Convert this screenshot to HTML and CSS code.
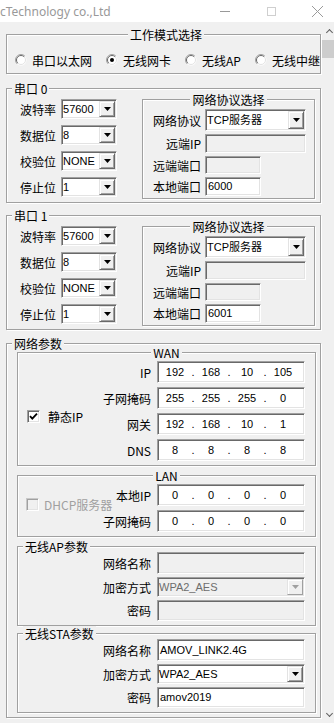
FILE: index.html
```html
<!DOCTYPE html>
<html lang="zh-CN">
<head>
<meta charset="utf-8">
<title>配置</title>
<link rel="stylesheet" href="styles.css">
</head>
<body>
<div class="window">
  <header class="titlebar">
    <span class="title">cTechnology co.,Ltd</span>
    <div class="caption">
      <span class="cap-btn"><span class="min-icon"></span></span>
      <span class="cap-btn"><span class="max-icon"></span></span>
      <span class="cap-btn"><span class="close-icon"></span></span>
    </div>
  </header>
  <div class="client">
    <main class="content">

      <section class="group mode">
        <div class="group-title">工作模式选择</div>
        <div class="radios">
          <label class="radio"><svg class="radio-icon" width="12" height="12" viewBox="0 0 12 12"><circle cx="6" cy="6" r="5.5" fill="#fff"/><path d="M2.1 9.9A5.5 5.5 0 0 1 9.9 2.1" fill="none" stroke="#a0a0a0"/><path d="M2.8 9.2A4.5 4.5 0 0 1 9.2 2.8" fill="none" stroke="#696969"/><path d="M9.2 2.8A4.5 4.5 0 0 1 2.8 9.2" fill="none" stroke="#e3e3e3"/></svg>串口以太网</label>
          <label class="radio"><svg class="radio-icon" width="12" height="12" viewBox="0 0 12 12"><circle cx="6" cy="6" r="5.5" fill="#fff"/><path d="M2.1 9.9A5.5 5.5 0 0 1 9.9 2.1" fill="none" stroke="#a0a0a0"/><path d="M2.8 9.2A4.5 4.5 0 0 1 9.2 2.8" fill="none" stroke="#696969"/><path d="M9.2 2.8A4.5 4.5 0 0 1 2.8 9.2" fill="none" stroke="#e3e3e3"/><circle cx="6" cy="6" r="2" fill="#000"/></svg>无线网卡</label>
          <label class="radio"><svg class="radio-icon" width="12" height="12" viewBox="0 0 12 12"><circle cx="6" cy="6" r="5.5" fill="#fff"/><path d="M2.1 9.9A5.5 5.5 0 0 1 9.9 2.1" fill="none" stroke="#a0a0a0"/><path d="M2.8 9.2A4.5 4.5 0 0 1 9.2 2.8" fill="none" stroke="#696969"/><path d="M9.2 2.8A4.5 4.5 0 0 1 2.8 9.2" fill="none" stroke="#e3e3e3"/></svg>无线AP</label>
          <label class="radio"><svg class="radio-icon" width="12" height="12" viewBox="0 0 12 12"><circle cx="6" cy="6" r="5.5" fill="#fff"/><path d="M2.1 9.9A5.5 5.5 0 0 1 9.9 2.1" fill="none" stroke="#a0a0a0"/><path d="M2.8 9.2A4.5 4.5 0 0 1 9.2 2.8" fill="none" stroke="#696969"/><path d="M9.2 2.8A4.5 4.5 0 0 1 2.8 9.2" fill="none" stroke="#e3e3e3"/></svg>无线中继</label>
        </div>
      </section>

      <section class="group serial serial0">
        <div class="group-title">串口 0</div>
        <div class="serial-body">
          <div class="port-form">
            <span class="lbl">波特率</span>
            <div class="combo sunken"><span class="combo-text">57600</span><span class="combo-btn"><svg width="7" height="4" viewBox="0 0 7 4"><path d="M0 0H7L3.5 4Z" fill="#000"/></svg></span></div>
            <span class="lbl">数据位</span>
            <div class="combo sunken"><span class="combo-text">8</span><span class="combo-btn"><svg width="7" height="4" viewBox="0 0 7 4"><path d="M0 0H7L3.5 4Z" fill="#000"/></svg></span></div>
            <span class="lbl">校验位</span>
            <div class="combo sunken"><span class="combo-text">NONE</span><span class="combo-btn"><svg width="7" height="4" viewBox="0 0 7 4"><path d="M0 0H7L3.5 4Z" fill="#000"/></svg></span></div>
            <span class="lbl">停止位</span>
            <div class="combo sunken"><span class="combo-text">1</span><span class="combo-btn"><svg width="7" height="4" viewBox="0 0 7 4"><path d="M0 0H7L3.5 4Z" fill="#000"/></svg></span></div>
          </div>
          <section class="group proto">
            <div class="group-title center">网络协议选择</div>
            <div class="proto-form">
              <span class="lbl">网络协议</span>
              <div class="combo sunken wide tall"><span class="combo-text">TCP服务器</span><span class="combo-btn"><svg width="7" height="4" viewBox="0 0 7 4"><path d="M0 0H7L3.5 4Z" fill="#000"/></svg></span></div>
              <span class="lbl">远端IP</span>
              <div class="field sunken disabled wide r2"></div>
              <span class="lbl">远端端口</span>
              <div class="field sunken disabled short r3"></div>
              <span class="lbl">本地端口</span>
              <div class="field sunken short r4">6000</div>
            </div>
          </section>
        </div>
      </section>

      <section class="group serial serial1">
        <div class="group-title">串口 1</div>
        <div class="serial-body">
          <div class="port-form">
            <span class="lbl">波特率</span>
            <div class="combo sunken"><span class="combo-text">57600</span><span class="combo-btn"><svg width="7" height="4" viewBox="0 0 7 4"><path d="M0 0H7L3.5 4Z" fill="#000"/></svg></span></div>
            <span class="lbl">数据位</span>
            <div class="combo sunken"><span class="combo-text">8</span><span class="combo-btn"><svg width="7" height="4" viewBox="0 0 7 4"><path d="M0 0H7L3.5 4Z" fill="#000"/></svg></span></div>
            <span class="lbl">校验位</span>
            <div class="combo sunken"><span class="combo-text">NONE</span><span class="combo-btn"><svg width="7" height="4" viewBox="0 0 7 4"><path d="M0 0H7L3.5 4Z" fill="#000"/></svg></span></div>
            <span class="lbl">停止位</span>
            <div class="combo sunken"><span class="combo-text">1</span><span class="combo-btn"><svg width="7" height="4" viewBox="0 0 7 4"><path d="M0 0H7L3.5 4Z" fill="#000"/></svg></span></div>
          </div>
          <section class="group proto">
            <div class="group-title center">网络协议选择</div>
            <div class="proto-form">
              <span class="lbl">网络协议</span>
              <div class="combo sunken wide tall"><span class="combo-text">TCP服务器</span><span class="combo-btn"><svg width="7" height="4" viewBox="0 0 7 4"><path d="M0 0H7L3.5 4Z" fill="#000"/></svg></span></div>
              <span class="lbl">远端IP</span>
              <div class="field sunken disabled wide r2"></div>
              <span class="lbl">远端端口</span>
              <div class="field sunken disabled short r3"></div>
              <span class="lbl">本地端口</span>
              <div class="field sunken short r4">6001</div>
            </div>
          </section>
        </div>
      </section>

      <section class="group net">
        <div class="group-title">网络参数</div>

        <section class="group sub wan">
          <div class="group-title center">WAN</div>
          <div class="sub-body">
            <label class="check static"><span class="checkbox sunken"><svg width="9" height="9" viewBox="0 0 9 9"><path d="M1 4.2L3.3 6.6L8 1.6" fill="none" stroke="#000" stroke-width="1.8"/></svg></span>静态IP</label>
            <div class="ip-form">
              <span class="lbl">IP</span>
              <div class="ipbox sunken"><span class="oct">192</span><span class="dot">.</span><span class="oct">168</span><span class="dot">.</span><span class="oct">10</span><span class="dot">.</span><span class="oct">105</span></div>
              <span class="lbl">子网掩码</span>
              <div class="ipbox sunken"><span class="oct">255</span><span class="dot">.</span><span class="oct">255</span><span class="dot">.</span><span class="oct">255</span><span class="dot">.</span><span class="oct">0</span></div>
              <span class="lbl">网关</span>
              <div class="ipbox sunken"><span class="oct">192</span><span class="dot">.</span><span class="oct">168</span><span class="dot">.</span><span class="oct">10</span><span class="dot">.</span><span class="oct">1</span></div>
              <span class="lbl">DNS</span>
              <div class="ipbox sunken"><span class="oct">8</span><span class="dot">.</span><span class="oct">8</span><span class="dot">.</span><span class="oct">8</span><span class="dot">.</span><span class="oct">8</span></div>
            </div>
          </div>
        </section>

        <section class="group sub lan">
          <div class="group-title center">LAN</div>
          <div class="sub-body">
            <label class="check dhcp"><span class="checkbox sunken off"></span>DHCP服务器</label>
            <div class="ip-form">
              <span class="lbl">本地IP</span>
              <div class="ipbox sunken"><span class="oct">0</span><span class="dot">.</span><span class="oct">0</span><span class="dot">.</span><span class="oct">0</span><span class="dot">.</span><span class="oct">0</span></div>
              <span class="lbl">子网掩码</span>
              <div class="ipbox sunken"><span class="oct">0</span><span class="dot">.</span><span class="oct">0</span><span class="dot">.</span><span class="oct">0</span><span class="dot">.</span><span class="oct">0</span></div>
            </div>
          </div>
        </section>

        <section class="group sub ap">
          <div class="group-title left">无线AP参数</div>
          <div class="wifi-form">
            <span class="lbl">网络名称</span>
            <div class="field sunken disabled f1"></div>
            <span class="lbl">加密方式</span>
            <div class="combo sunken disabled f2"><span class="combo-text">WPA2_AES</span><span class="combo-btn"><svg width="7" height="4" viewBox="0 0 7 4"><path d="M0 0H7L3.5 4Z" fill="#a0a0a0"/></svg></span></div>
            <span class="lbl">密码</span>
            <div class="field sunken disabled f3"></div>
          </div>
        </section>

        <section class="group sub sta">
          <div class="group-title left">无线STA参数</div>
          <div class="wifi-form">
            <span class="lbl">网络名称</span>
            <div class="field sunken f1">AMOV_LINK2.4G</div>
            <span class="lbl">加密方式</span>
            <div class="combo sunken f2"><span class="combo-text">WPA2_AES</span><span class="combo-btn"><svg width="7" height="4" viewBox="0 0 7 4"><path d="M0 0H7L3.5 4Z" fill="#000"/></svg></span></div>
            <span class="lbl">密码</span>
            <div class="field sunken f3">amov2019</div>
          </div>
        </section>
      </section>

    </main>
    <div class="scrollbar">
      <span class="sb-arrow up"><span class="chev chev-up"></span></span>
      <span class="sb-thumb"></span>
      <span class="sb-track"></span>
      <span class="sb-arrow down"><span class="chev chev-down"></span></span>
    </div>
  </div>
</div>
</body>
</html>
```

FILE: styles.css
```css
* { box-sizing: border-box; }
html, body { margin: 0; padding: 0; }
body {
  width: 334px;
  height: 723px;
  overflow: hidden;
  background: #f0f0f0;
  font-family: "Noto Sans CJK SC", "Noto Sans", sans-serif;
  font-size: 12px;
  line-height: 15px;
  color: #000;
}
.window { display: flex; flex-direction: column; height: 723px; }

/* title bar */
.titlebar { height: 22px; flex: none; background: #fff; display: flex; align-items: center; }
.title {
  flex: 1; min-width: 0;
  font-family: "Noto Sans", sans-serif; font-size: 12px; color: #999;
  white-space: nowrap; overflow: hidden;
}
.caption { display: flex; height: 22px; margin-right: -6px; flex: none; }
.cap-btn { width: 46px; height: 22px; display: flex; align-items: center; justify-content: center; }
.min-icon { display: block; width: 10px; height: 1px; background: #999; margin-top: 1px; }
.max-icon { display: block; width: 9px; height: 9px; border: 1px solid #cfcfcf; }
.close-icon {
  display: block;
  width: 11px;
  height: 11px;
  background:
    linear-gradient(45deg, transparent calc(50% - 0.7px), #9a9a9a calc(50% - 0.7px), #9a9a9a calc(50% + 0.7px), transparent calc(50% + 0.7px)),
    linear-gradient(-45deg, transparent calc(50% - 0.7px), #9a9a9a calc(50% - 0.7px), #9a9a9a calc(50% + 0.7px), transparent calc(50% + 0.7px));
}

/* client */
.client { flex: 1; display: flex; min-height: 0; }
.content { width: 322px; flex: none; padding: 12px 0 0 6px; overflow: hidden; }

/* etched group box */
.group {
  border: 1px solid #a0a0a0;
  box-shadow: 1px 1px 0 #fff, inset 1px 1px 0 #fff;
}
.group-title {
  width: max-content;
  height: 15px;
  margin-top: -8px;
  padding: 0 2px;
  background: #f0f0f0;
  line-height: 15px;
  white-space: nowrap;
}
.group-title.center { margin-left: auto; margin-right: auto; }

/* mode group */
.mode { width: 315px; height: 40px; }
.mode .group-title { margin-left: 121px; }
.radios { display: flex; margin: 10px 0 0 8px; gap: 14px; white-space: nowrap; }
.radio { display: flex; align-items: center; gap: 5px; height: 16px; flex: none; background: #f0f0f0; }
.radio-icon { display: block; flex: none; }

/* serial groups */
.serial { width: 315px; height: 115px; }
.serial0 { margin-top: 14px; }
.serial1 { margin-top: 12px; }
.serial > .group-title { margin-left: 5px; }
.serial-body { display: flex; margin-top: 3px; }
.port-form {
  display: grid;
  grid-template-columns: auto 56px;
  column-gap: 5px;
  row-gap: 6px;
  align-items: center;
  align-self: flex-start;
  margin-left: 13px;
}
.proto { width: 173px; height: 100px; margin-left: auto; margin-right: 5px; }
.proto-form {
  display: grid;
  grid-template-columns: 48px auto;
  column-gap: 4px;
  row-gap: 3px;
  align-items: center;
  justify-items: start;
  margin: 2px 0 0 10px;
}
.lbl { white-space: nowrap; justify-self: end; text-align: right; }

/* controls */
.sunken {
  border: 1px solid;
  border-color: #a0a0a0 #fff #fff #a0a0a0;
  box-shadow: inset 1px 1px 0 #696969, inset -1px -1px 0 #e3e3e3;
  background: #fff;
}
.field, .combo, .ipbox {
  font-family: "Liberation Sans", "Noto Sans CJK SC", sans-serif;
  font-size: 11px;
  line-height: 13px;
}
.field { height: 19px; display: flex; align-items: center; padding-left: 2px; }
.disabled { background: #f0f0f0; }
.combo { display: flex; height: 20px; width: 56px; }
.combo-text { flex: 1; min-width: 0; display: flex; align-items: center; padding-left: 1px; white-space: nowrap; overflow: hidden; }
.combo-btn {
  width: 16px;
  flex: none;
  margin: 1px 1px 1px 0;
  background: #f0f0f0;
  border: 1px solid;
  border-color: #e3e3e3 #696969 #696969 #e3e3e3;
  box-shadow: inset 1px 1px 0 #fff, inset -1px -1px 0 #a0a0a0;
  display: flex; align-items: center; justify-content: center;
}
.combo-btn svg { display: block; }
.combo.disabled .combo-text { color: #6d6d6d; }
.combo.disabled .combo-btn { border-color: #e3e3e3 #a0a0a0 #a0a0a0 #e3e3e3; box-shadow: inset 1px 1px 0 #fff; }

.wide { width: 101px; }
.short { width: 56px; }
.tall { height: 22px; }
.r2 { height: 19px; }
.r3 { height: 18px; }
.r4 { height: 19px; }

/* network params */
.net { width: 315px; height: 375px; margin-top: 13px; }
.net > .group-title { margin-left: 5px; }
.sub { width: 299px; margin-left: 10px; }
.wan { height: 114px; margin-top: 1px; }
.lan { height: 62px; margin-top: 9px; }
.ap { height: 80px; margin-top: 9px; }
.sta { height: 80px; margin-top: 7px; }
.group-title.left { margin-left: 5px; }
.sub-body { display: flex; }
.ip-form {
  display: grid;
  grid-template-columns: auto 148px;
  column-gap: 6px;
  row-gap: 4px;
  align-items: center;
  flex: none;
  margin: 1px 10px 0 0;
}
.ipbox { height: 22px; display: flex; align-items: center; padding-left: 3px; }
.oct { width: 28px; text-align: center; }
.dot { width: 8px; text-align: center; }

.check { display: flex; align-items: center; height: 15px; align-self: flex-start; white-space: nowrap; flex: 1 1 0; min-width: 0; }
.checkbox { width: 13px; height: 13px; flex: none; display: flex; align-items: center; justify-content: center; }
.checkbox svg { display: block; }
.checkbox.off { background: #f0f0f0; border-color: #c8c8c8 #fff #fff #c8c8c8; box-shadow: inset 1px 1px 0 #a0a0a0, inset -1px -1px 0 #e3e3e3; }
.static { margin: 49px 0 0 9px; gap: 8px; }
.dhcp { margin: 14px 0 0 8px; gap: 5px; color: #a0a0a0; }

.wifi-form {
  display: grid;
  grid-template-columns: auto 148px;
  column-gap: 6px;
  row-gap: 3px;
  align-items: center;
  width: max-content;
  margin: -2px 10px 0 auto;
}
.f1 { height: 22px; }
.f2 { height: 20px; width: 148px; }
.f3 { height: 21px; }

/* scrollbar */
.scrollbar { width: 12px; flex: none; display: flex; flex-direction: column; }
.sb-arrow { height: 18px; display: flex; align-items: center; justify-content: center; padding-left: 2px; flex: none; }
.sb-arrow.down { height: 17px; }
.chev {
  display: block;
  width: 5px;
  height: 5px;
  border-top: 1.5px solid #606060;
  border-left: 1.5px solid #606060;
}
.chev-up { transform: rotate(45deg); margin-top: 3px; }
.chev-down { transform: rotate(225deg); margin-top: -3px; }
.sb-thumb { height: 18px; background: #cdcdcd; flex: none; }
.sb-track { flex: 1; }
```
